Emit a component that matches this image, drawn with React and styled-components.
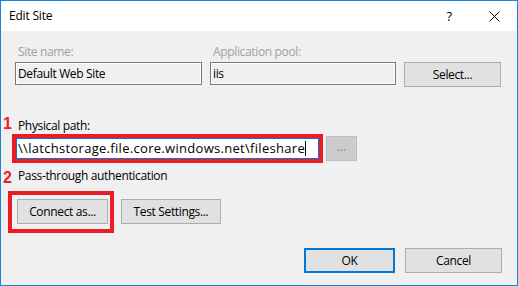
import styled, { createGlobalStyle } from "styled-components";

const GlobalStyle = createGlobalStyle`
  html, body {
    margin: 0;
    padding: 0;
    background: #ffffff;
  }
  * {
    box-sizing: border-box;
  }
`;

const App = () => {
  return (
    <>
      <GlobalStyle />
      <Window>
        {/* Title bar */}
        <TitleBar>
          <Title>Edit Site</Title>
          <TitleButtons>
            <HelpGlyph>?</HelpGlyph>
            <CloseGlyph>
              <svg width="11" height="11" viewBox="0 0 11 11">
                <path d="M0.5 0.5 L10.5 10.5 M10.5 0.5 L0.5 10.5" stroke="#000" strokeWidth="1" />
              </svg>
            </CloseGlyph>
          </TitleButtons>
        </TitleBar>

        <Body>
          <TopGrid>
            <FieldLabel $disabled>Site name:</FieldLabel>
            <FieldLabel $disabled>Application pool:</FieldLabel>
            <span />
            <TextBox $disabled>Default Web Site</TextBox>
            <TextBox $disabled>iis</TextBox>
            <Button $width={97}>Select...</Button>
          </TopGrid>

          <PathSection>
            <Marker $top={-2}>1</Marker>
            <FieldLabel>Physical path:</FieldLabel>
            <PathRow>
              <Highlight $inset="-4px">
                <PathBox>
                  <PathText>{"\\\\latchstorage.file.core.windows.net\\fileshare"}</PathText>
                  <Caret />
                </PathBox>
              </Highlight>
              <BrowseButton disabled>...</BrowseButton>
            </PathRow>
          </PathSection>

          <AuthSection>
            <Marker $top={2}>2</Marker>
            <FieldLabel>Pass-through authentication</FieldLabel>
            <ButtonRow>
              <Highlight $inset="-8px -6px -9px -9px">
                <Button $width={91}>Connect as...</Button>
              </Highlight>
              <Button $width={100}>Test Settings...</Button>
            </ButtonRow>
          </AuthSection>

          <Footer>
            <Button $width={91} $default>OK</Button>
            <Button $width={97}>Cancel</Button>
          </Footer>
        </Body>
      </Window>
    </>
  );
};

const font = `"Open Sans", "Noto Sans", "Liberation Sans", sans-serif`;

const Window = styled.div`
  width: 518px;
  height: 286px;
  border: 1px solid #1883d7;
  display: flex;
  flex-direction: column;
  font-family: ${font};
  font-size: 12px;
  color: #000;
  background: #f0f0f0;
  overflow: hidden;
`;

const TitleBar = styled.div`
  height: 30px;
  flex: none;
  background: #ffffff;
  display: flex;
  align-items: center;
  justify-content: space-between;
  padding: 0 17px 0 8px;
`;

const Title = styled.span`
  font-size: 12px;
  letter-spacing: -0.2px;
  margin-top: -1px;
`;

const TitleButtons = styled.div`
  display: flex;
  align-items: center;
  gap: 37px;
`;

const HelpGlyph = styled.span`
  font-size: 13px;
  margin-top: -1px;
`;

const CloseGlyph = styled.span`
  display: flex;
  width: 11px;
  height: 11px;
`;

const Body = styled.div`
  flex: 1;
  display: flex;
  flex-direction: column;
  padding: 13px 15px 0 14px;
`;

const TopGrid = styled.div`
  display: grid;
  grid-template-columns: 187px 186px 97px;
  column-gap: 8px;
  row-gap: 2px;
  align-items: start;
`;

const FieldLabel = styled.div`
  height: 16px;
  line-height: 16px;
  padding-left: 3px;
  letter-spacing: -0.35px;
  white-space: nowrap;
  color: ${(p) => (p.$disabled ? "#a0a0a0" : "#000")};
`;

const TextBox = styled.div`
  height: 23px;
  line-height: 21px;
  padding: 0 2px;
  border: 1px solid ${(p) => (p.$disabled ? "#7a7a7a" : "#0078d7")};
  background: ${(p) => (p.$disabled ? "#f0f0f0" : "#ffffff")};
  box-shadow: ${(p) => (p.$disabled ? "inset 0 0 0 1px #ffffff" : "none")};
  letter-spacing: -0.35px;
  white-space: nowrap;
  overflow: hidden;
`;

const Button = styled.button`
  width: ${(p) => p.$width}px;
  height: 25px;
  padding: 0;
  font-family: ${font};
  font-size: 12px;
  letter-spacing: -0.35px;
  color: #000;
  background: #e1e1e1;
  border: ${(p) => (p.$default ? "2px solid #0078d7" : "1px solid #adadad")};
  border-radius: 0;
  cursor: default;
`;

const PathSection = styled.div`
  position: relative;
  margin-top: 31px;
  display: flex;
  flex-direction: column;
  gap: 2px;
`;

const PathRow = styled.div`
  display: flex;
  align-items: center;
  gap: 7px;
  padding-left: 1px;
`;

const Highlight = styled.div`
  position: relative;
  display: flex;

  &::after {
    content: "";
    position: absolute;
    inset: ${(p) => p.$inset};
    border: 4px solid #ed1c24;
    pointer-events: none;
  }
`;

const PathBox = styled.div`
  width: 303px;
  height: 21px;
  padding: 0 1px;
  background: #ffffff;
  border: 1px solid #0078d7;
  white-space: nowrap;
  overflow: hidden;
  display: flex;
  align-items: center;
`;

const PathText = styled.span`
  font-size: 13px;
  letter-spacing: 0.3px;
  line-height: 19px;
`;

const Caret = styled.span`
  display: inline-block;
  flex: none;
  width: 1px;
  height: 15px;
  background: #000;
`;

const BrowseButton = styled.button`
  width: 31px;
  height: 25px;
  padding: 0 0 4px;
  font-family: ${font};
  font-size: 12px;
  color: #838383;
  background: #cccccc;
  border: 1px solid #bfbfbf;
  border-radius: 0;
`;

const Marker = styled.span`
  position: absolute;
  left: -12px;
  top: ${(p) => p.$top}px;
  font-family: "Liberation Sans", Arial, sans-serif;
  font-weight: bold;
  font-size: 16px;
  line-height: 16px;
  color: #ed1c24;
`;

const AuthSection = styled.div`
  position: relative;
  margin-top: 7px;
  display: flex;
  flex-direction: column;
  gap: 15px;
`;

const ButtonRow = styled.div`
  display: flex;
  gap: 13px;
  padding-left: 2px;
`;

const Footer = styled.div`
  margin-top: 24px;
  display: flex;
  justify-content: flex-end;
  gap: 10px;
`;

export default App;
